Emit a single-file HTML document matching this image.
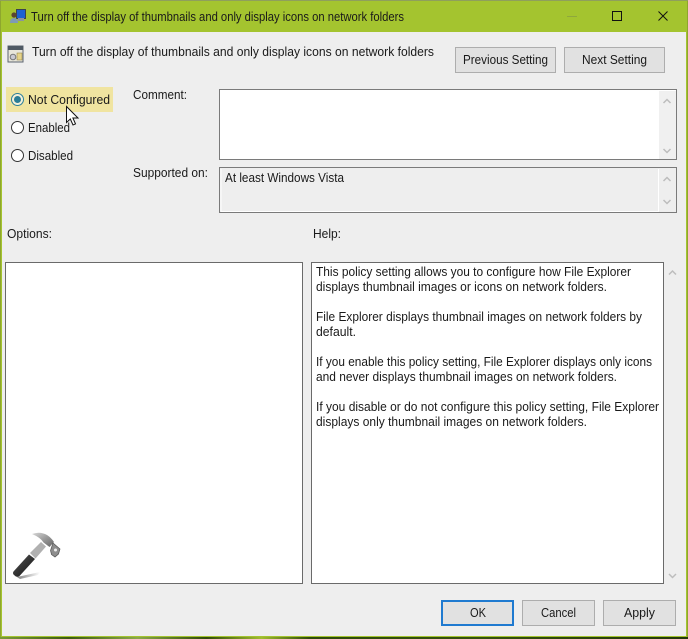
<!DOCTYPE html>
<html><head><meta charset="utf-8">
<style>
html,body{margin:0;padding:0;background:#eee;}
svg{display:block;}
text{font-family:"Liberation Sans",sans-serif;font-size:12.5px;fill:#1a1a1a;}
</style></head><body>
<svg width="688" height="639" viewBox="0 0 688 639" xmlns="http://www.w3.org/2000/svg">
<defs>
<linearGradient id="bot" x1="0" x2="1" y1="0" y2="0">
<stop offset="0" stop-color="#7a9a3a"/><stop offset=".1" stop-color="#3a5a10"/><stop offset=".2" stop-color="#8aa84a"/><stop offset=".3" stop-color="#2f4a08"/><stop offset=".38" stop-color="#a0bc30"/><stop offset=".45" stop-color="#2c4a0a"/><stop offset=".7" stop-color="#33500e"/><stop offset="1" stop-color="#22380a"/>
</linearGradient>
<linearGradient id="handle" x1="0" x2="1" y1="0" y2="1"><stop offset="0" stop-color="#555"/><stop offset="1" stop-color="#111"/></linearGradient>
<linearGradient id="head" x1="0" x2="1" y1="0" y2="1"><stop offset="0" stop-color="#d8d8d8"/><stop offset=".5" stop-color="#9a9a9a"/><stop offset="1" stop-color="#666"/></linearGradient>
<linearGradient id="shadow" x1="0" x2="1" y1="0" y2="0"><stop offset="0" stop-color="#555"/><stop offset="1" stop-color="#fff"/></linearGradient>
</defs>
<!-- frame -->
<rect width="688" height="639" fill="#a4c42f"/>
<rect width="688" height="1" fill="#8f9f5c"/>
<rect x="0" y="637" width="688" height="2" fill="url(#bot)"/>
<rect x="0" y="1" width="1" height="636" fill="#8ea62e"/>
<rect x="687" y="1" width="1" height="636" fill="#8ea62e"/>
<rect x="2" y="32" width="684" height="604" fill="#eeeeee"/>

<!-- title icon -->
<rect x="16.500" y="9.500" width="9" height="9" fill="#1c62d2" stroke="#3b4250"/>
<rect x="18" y="18" width="6" height="3" fill="#8b93a0"/>
<circle cx="14" cy="15" r="2.600" fill="#5a4632"/>
<path d="M10 23q0-5 4-5t4 5z" fill="#7e9ab4"/>
<text x="31" y="21" textLength="373" lengthAdjust="spacingAndGlyphs" fill="#111">Turn off the display of thumbnails and only display icons on network folders</text>

<!-- window buttons -->
<rect x="567" y="16" width="10" height="1" fill="#8ea83c"/>
<rect x="612.500" y="11.500" width="9" height="9" fill="none" stroke="#111" stroke-width="1"/>
<path d="M658.500 11.500l9 9M667.500 11.500l-9 9" stroke="#111" stroke-width="1" fill="none"/>

<!-- policy icon -->
<rect x="8" y="46" width="15" height="16" fill="#e8e6da" stroke="#5c6470"/>
<rect x="8" y="46" width="15" height="4" fill="#4f5964"/>
<circle cx="13" cy="57" r="2.800" fill="#c9c9d2" stroke="#777"/>
<rect x="17" y="53" width="5" height="7" fill="#e6d48a" stroke="#8c7a3a" stroke-width=".5"/>
<text x="32" y="56" textLength="402" lengthAdjust="spacingAndGlyphs">Turn off the display of thumbnails and only display icons on network folders</text>

<!-- prev/next -->
<rect x="455.500" y="47.500" width="100" height="25" fill="#e1e1e1" stroke="#adadad"/>
<text x="463" y="64" textLength="85" lengthAdjust="spacingAndGlyphs">Previous Setting</text>
<rect x="564.500" y="47.500" width="100" height="25" fill="#e1e1e1" stroke="#adadad"/>
<text x="582" y="64" textLength="65" lengthAdjust="spacingAndGlyphs">Next Setting</text>

<!-- radios -->
<rect x="6" y="87" width="107" height="25" fill="#f0e4a0"/>
<circle cx="17.500" cy="99.500" r="6" fill="#f4f0d8" stroke="#2c7f9a" stroke-width="1"/>
<circle cx="17.500" cy="99.500" r="3.500" fill="#2a7d96"/>
<text x="28" y="104" textLength="82" lengthAdjust="spacingAndGlyphs">Not Configured</text>
<circle cx="17.500" cy="127.500" r="6" fill="#fff" stroke="#333"/>
<text x="28" y="132" textLength="42" lengthAdjust="spacingAndGlyphs">Enabled</text>
<circle cx="17.500" cy="155.500" r="6" fill="#fff" stroke="#333"/>
<text x="28" y="160" textLength="45" lengthAdjust="spacingAndGlyphs">Disabled</text>

<!-- cursor -->
<path d="M66.500 106.500v16l3.800-3.500 2.700 6 2.500-1.100-2.600-5.900h5.100z" fill="#fff" stroke="#111" stroke-width="1"/>

<!-- labels -->
<text x="133" y="99" textLength="54" lengthAdjust="spacingAndGlyphs">Comment:</text>
<text x="133" y="177" textLength="75" lengthAdjust="spacingAndGlyphs">Supported on:</text>
<text x="7" y="238" textLength="45" lengthAdjust="spacingAndGlyphs">Options:</text>
<text x="313" y="238" textLength="28" lengthAdjust="spacingAndGlyphs">Help:</text>

<!-- comment box -->
<rect x="219.500" y="89.500" width="457" height="70" fill="#fff" stroke="#7a7a7a"/>
<rect x="659" y="91" width="17" height="68" fill="#f0f0f0"/>
<path d="M663.500 103l3.500-3.500 3.500 3.500" fill="none" stroke="#bdbdbd" stroke-width="1.500"/>
<path d="M663.500 149l3.500 3.500 3.500-3.500" fill="none" stroke="#bdbdbd" stroke-width="1.500"/>

<!-- supported box -->
<rect x="219.500" y="167.500" width="457" height="45" fill="#eeeeee" stroke="#7a7a7a"/>
<path d="M221 211.500V169" stroke="#fff" fill="none"/>
<path d="M221 211.500h437.500V169" stroke="#fff" fill="none"/>
<text x="225" y="182" textLength="119" lengthAdjust="spacingAndGlyphs">At least Windows Vista</text>
<path d="M663.500 181l3.500-3.500 3.500 3.500" fill="none" stroke="#bdbdbd" stroke-width="1.500"/>
<path d="M663.500 200l3.500 3.500 3.500-3.500" fill="none" stroke="#bdbdbd" stroke-width="1.500"/>

<!-- options box -->
<rect x="5.500" y="262.500" width="297" height="321" fill="#fff" stroke="#6a6a6a"/>

<!-- hammer -->
<path d="M17 577l23-5-2 3-18 4z" fill="url(#shadow)" opacity=".75"/>
<path d="M13.500 571.500l15.500-17 6 4.500-15.500 17q-2 1.500-4 .3l-2-1.800q-1-1.500 0-3z" fill="url(#handle)"/>
<path d="M30 553l11-11 5 4.500-10.500 12z" fill="#b0b0b0"/>
<path d="M32 534q8-3 15 1 4 2.500 7 7l-4.500 5-6-4.500q-3-5-11.500-8.500z" fill="url(#head)"/>
<path d="M53 543l7 6-1.500 5-3.500 3-3.500-2.500-1-4z" fill="#8d8d8d" stroke="#555" stroke-width=".7"/>
<circle cx="55.500" cy="550" r="1.500" fill="#eee"/>

<!-- help box -->
<rect x="311.500" y="262.500" width="352" height="321" fill="#fff" stroke="#6a6a6a"/>
<text x="316" y="276" textLength="315" lengthAdjust="spacingAndGlyphs">This policy setting allows you to configure how File Explorer</text>
<text x="316" y="291" textLength="291" lengthAdjust="spacingAndGlyphs">displays thumbnail images or icons on network folders.</text>
<text x="316" y="321" textLength="326" lengthAdjust="spacingAndGlyphs">File Explorer displays thumbnail images on network folders by</text>
<text x="316" y="336" textLength="40" lengthAdjust="spacingAndGlyphs">default.</text>
<text x="316" y="366" textLength="336" lengthAdjust="spacingAndGlyphs">If you enable this policy setting, File Explorer displays only icons</text>
<text x="316" y="381" textLength="301" lengthAdjust="spacingAndGlyphs">and never displays thumbnail images on network folders.</text>
<text x="316" y="411" textLength="343" lengthAdjust="spacingAndGlyphs">If you disable or do not configure this policy setting, File Explorer</text>
<text x="316" y="426" textLength="271" lengthAdjust="spacingAndGlyphs">displays only thumbnail images on network folders.</text>
<path d="M669 274.500l3.500-3.500 3.500 3.500" fill="none" stroke="#bdbdbd" stroke-width="1.500"/>
<path d="M669 574l3.500 3.500 3.500-3.500" fill="none" stroke="#bdbdbd" stroke-width="1.500"/>

<!-- bottom buttons -->
<rect x="442" y="601" width="71" height="24" fill="#e1e1e1" stroke="#1f7ad0" stroke-width="2"/>
<text x="470" y="617" textLength="16" lengthAdjust="spacingAndGlyphs">OK</text>
<rect x="522.500" y="600.500" width="72" height="25" fill="#e1e1e1" stroke="#adadad"/>
<text x="541" y="617" textLength="35" lengthAdjust="spacingAndGlyphs">Cancel</text>
<rect x="603.500" y="600.500" width="72" height="25" fill="#e1e1e1" stroke="#adadad"/>
<text x="624" y="617" textLength="31" lengthAdjust="spacingAndGlyphs">Apply</text>
</svg>
</body></html>
